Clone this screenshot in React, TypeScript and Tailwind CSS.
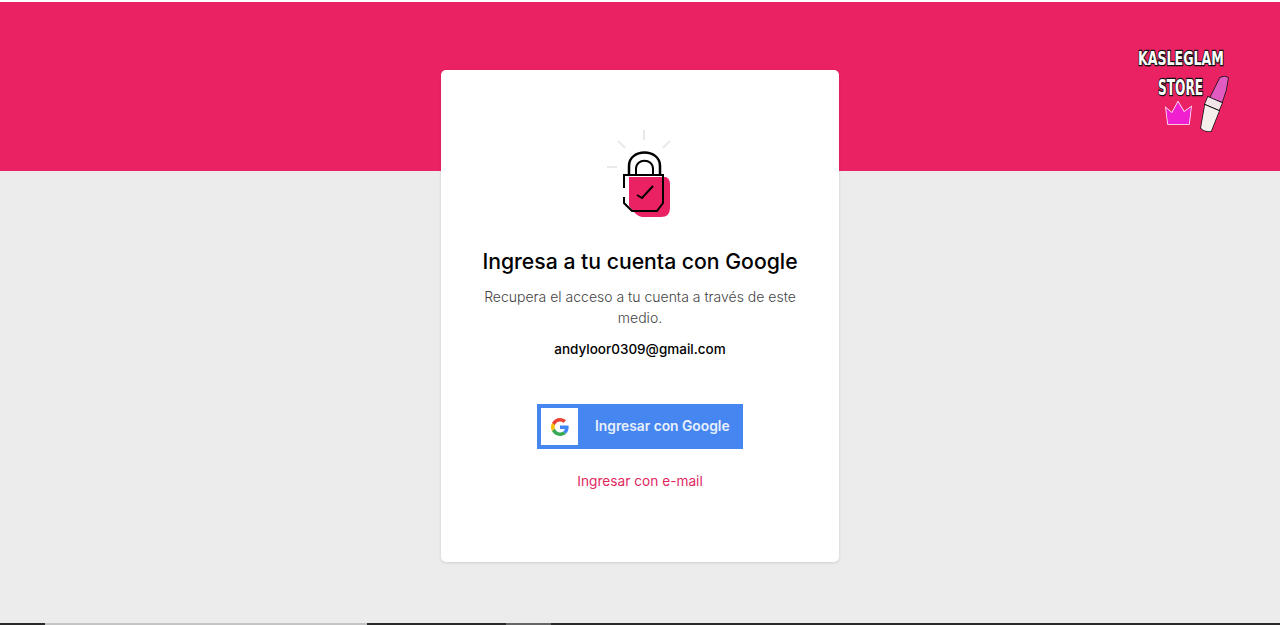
const LockIcon = () => (
  <svg width="70" height="92" viewBox="0 0 70 92" fill="none">
    <path d="M25 49H62Q66 51 66 56V80Q66 89 57 89H38Q33 89 25 78Z" fill="#ea2264" />
    <path d="M40 2v10M14 13l7 7M66 13l-7 7M3 39h10" stroke="#e9e9e9" strokeWidth="2" />
    <path d="M25 47V38c0-18 31-18 31 0v9" stroke="#000" strokeWidth="2.5" />
    <path d="M32 47V41c0-11 17-11 17 0v6" stroke="#000" strokeWidth="2" />
    <path d="M20 60V47H59V75L53 83H28L20 75V69" stroke="#000" strokeWidth="2" />
    <path d="M33 67l5 3 11-12" stroke="#000" strokeWidth="2" />
  </svg>
)

const GoogleIcon = () => (
  <svg width="18" height="18" viewBox="0 0 48 48">
    <path fill="#EA4335" d="M24 9.500c3.500 0 6.700 1.300 9.100 3.500l6.800-6.800C35.800 2.400 30.300 0 24 0 14.600 0 6.500 5.400 2.600 13.200l7.900 6.100C12.400 13.700 17.700 9.500 24 9.500z" />
    <path fill="#4285F4" d="M47 24.500c0-1.600-.1-3.100-.4-4.500H24v9h12.900c-.6 3-2.200 5.500-4.800 7.200l7.700 6C44.300 38 47 31.800 47 24.500z" />
    <path fill="#FBBC05" d="M10.500 28.700c-.5-1.400-.8-3-.8-4.700s.3-3.200.8-4.700l-7.900-6.100C.9 16.500 0 20.100 0 24s.9 7.500 2.600 10.800l7.900-6.100z" />
    <path fill="#34A853" d="M24 48c6.500 0 11.900-2.100 15.800-5.800l-7.700-6c-2.100 1.400-4.900 2.300-8.100 2.300-6.300 0-11.600-4.200-13.500-9.800l-7.900 6.100C6.500 42.600 14.600 48 24 48z" />
  </svg>
)

const Logo = () => (
  <div className="w-[92px] h-[88px] shrink-0 flex flex-col font-['DejaVu_Sans',sans-serif] font-bold text-white [-webkit-text-stroke:2.5px_#111] [paint-order:stroke_fill]">
    <div className="text-[20px] leading-[22px] whitespace-nowrap origin-left scale-x-[0.63]">KASLEGLAM</div>
    <div className="flex">
      <div className="w-[38px] shrink-0 ml-[20px] flex flex-col items-start">
        <div className="text-[21px] leading-[24px] mt-[7px] origin-left scale-x-[0.58]">STORE</div>
        <svg className="ml-[7px] mt-[1px] shrink-0" width="28" height="26" viewBox="0 0 28 26">
          <path d="M1 7l6 5 6-11 6 10 7-5-2 17H3z" fill="#f01fd0" stroke="#fff" strokeWidth="1.500" />
        </svg>
      </div>
      <svg className="mt-[5px] -ml-[1px] shrink-0" width="34" height="60" viewBox="0 0 34 60">
        <path d="M15 24L25 4q5-3 8 0l-2 12-4 12z" fill="#e05cc0" stroke="#111" strokeWidth="1.500" />
        <path d="M13 23l14 6-3 7-14-6z" fill="#f3e5ea" stroke="#111" strokeWidth="1.500" />
        <path d="M10 31l14 6-8 20q-6 1-10-3z" fill="#f5f0ec" stroke="#111" strokeWidth="1.500" />
      </svg>
    </div>
  </div>
)

export default function App() {
  return (
    <div className="h-[625px] overflow-hidden flex flex-col bg-[#ececec] font-['Inter','Liberation_Sans',sans-serif]">
      <div className="h-[2px] bg-white shrink-0"></div>
      <div className="h-[169px] shrink-0 bg-[#ea2264] flex justify-end pt-[45px] pr-[50px]">
        <Logo />
      </div>

      <div className="flex-1 flex flex-col items-center">
        <div className="w-[398px] h-[492px] -mt-[101px] bg-white rounded-[5px] shadow-[0_1px_3px_rgba(0,0,0,0.12)] flex flex-col items-center shrink-0">
          <div className="mt-[58px] mr-[2px]">
            <LockIcon />
          </div>
          <h1 className="mt-[27px] text-[21.2px] leading-[28px] font-medium text-black whitespace-nowrap">Ingresa a tu cuenta con Google</h1>
          <p className="mt-[11px] w-[330px] text-center text-[14px] leading-[21px] font-light text-[#444]">
            Recupera el acceso a tu cuenta a través de este medio.
          </p>
          <div className="mt-[11px] text-[13.500px] leading-[20px] font-medium text-black">andyloor0309@gmail.com</div>
          <button className="mt-[45px] w-[206px] h-[45px] bg-[#4686f0] flex items-center pl-[4px]">
            <span className="w-[37px] h-[37px] bg-white flex items-center justify-center">
              <GoogleIcon />
            </span>
            <span className="ml-[17px] text-[13.800px] font-semibold text-[#e8f0fe] whitespace-nowrap">Ingresar con Google</span>
          </button>
          <a className="mt-[22px] text-[13.700px] leading-[20px] text-[#e0285f]">Ingresar con e-mail</a>
        </div>
      </div>

      <div className="h-[2px] shrink-0 flex bg-[#2a2a2a]">
        <div className="w-[45px]"></div>
        <div className="w-[322px] bg-[#c4c4c4]"></div>
        <div className="w-[139px]"></div>
        <div className="w-[45px] bg-[#666]"></div>
      </div>
    </div>
  )
}
